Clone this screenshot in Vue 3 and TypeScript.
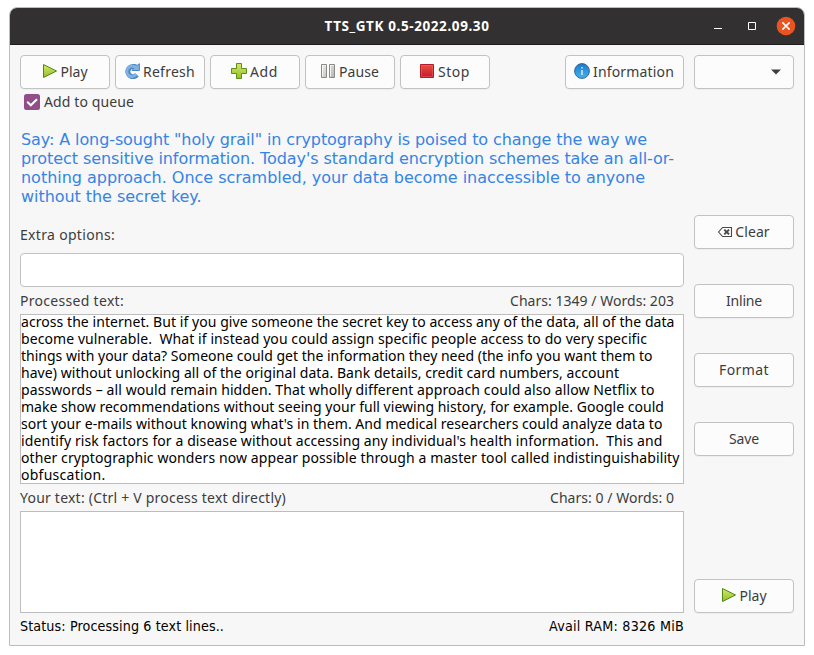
<script setup lang="ts">
import type { Directive } from 'vue'

interface TextLine {
  text: string
  width: number
}

interface ToolButton {
  label: string
  icon: string
  width: number
}

const tools: ToolButton[] = [
  { label: 'Play', icon: 'play', width: 27 },
  { label: 'Refresh', icon: 'refresh', width: 52 },
  { label: 'Add', icon: 'add', width: 28 },
  { label: 'Pause', icon: 'pause', width: 40 },
  { label: 'Stop', icon: 'stop', width: 32 },
]

const sayLines: TextLine[] = [
  { text: 'Say: A long-sought "holy grail" in cryptography is poised to change the way we', width: 626 },
  { text: "protect sensitive information. Today's standard encryption schemes take an all-or-", width: 653 },
  { text: 'nothing approach. Once scrambled, your data become inaccessible to anyone', width: 624 },
  { text: 'without the secret key.', width: 180.5 },
]

const processed: TextLine[] = [
  { text: 'across the internet. But if you give someone the secret key to access any of the data, all of the data', width: 653.5 },
  { text: 'become vulnerable.  What if instead you could assign specific people access to do very specific', width: 626 },
  { text: 'things with your data? Someone could get the information they need (the info you want them to', width: 631.5 },
  { text: 'have) without unlocking all of the original data. Bank details, credit card numbers, account', width: 598 },
  { text: 'passwords – all would remain hidden. That wholly different approach could also allow Netflix to', width: 633.5 },
  { text: 'make show recommendations without seeing your full viewing history, for example. Google could', width: 643 },
  { text: "sort your e-mails without knowing what's in them. And medical researchers could analyze data to", width: 641.5 },
  { text: "identify risk factors for a disease without accessing any individual's health information.  This and", width: 641.5 },
  { text: 'other cryptographic wonders now appear possible through a master tool called indistinguishability', width: 658.5 },
  { text: 'obfuscation.', width: 84.5 },
]

// Spreads the letters so that a line takes up exactly the given width.
const vFit: Directive<HTMLElement, number> = {
  mounted(el, binding) {
    const count = (el.textContent ?? '').length
    const natural = el.getBoundingClientRect().width
    el.style.letterSpacing = `${(binding.value - natural) / count}px`
  },
}
</script>

<template>
  <div class="window">
    <header class="titlebar">
      <span v-fit="165" class="title">TTS_GTK 0.5-2022.09.30</span>
      <div class="controls">
        <svg width="10" height="10" viewBox="0 0 10 10"><path d="M1 7.5h8" stroke="#fff" /></svg>
        <svg width="10" height="10" viewBox="0 0 10 10"><path d="M1.5 1.5h7v7h-7z" fill="none" stroke="#fff" /></svg>
        <svg width="20" height="20" viewBox="0 0 20 20">
          <circle cx="10" cy="10" r="9.3" fill="#e95420" />
          <path d="M6.4 6.4l7.2 7.2M13.6 6.4l-7.2 7.2" stroke="#fff" stroke-width="1.5" />
        </svg>
      </div>
    </header>

    <main class="content">
      <section class="left">
        <div class="toolbar">
          <button v-for="t in tools" :key="t.label" class="btn tool" type="button">
            <svg v-if="t.icon === 'play'" class="icon" viewBox="0 0 16 16">
              <path d="M1.5 1.5L14.5 8l-13 6.5z" fill="url(#leaf)" stroke="#4e8a13" />
            </svg>
            <svg v-else-if="t.icon === 'refresh'" class="icon" viewBox="0 0 16 16">
              <path d="M12.9 11.9A5.1 5.1 0 1 1 11 3.9" fill="none" stroke="#4f87c2" stroke-width="5" />
              <path d="M7.8 7.5h7.6V.7l-2.2 1.6-3-1v4z" fill="#7fb2e2" stroke="#4f87c2" stroke-linejoin="round" />
              <path d="M12.2 11.2A5.1 5.1 0 1 1 10.6 4L12.4 5.2" fill="none" stroke="#7fb2e2" stroke-width="3" />
            </svg>
            <svg v-else-if="t.icon === 'add'" class="icon" viewBox="0 0 16 16">
              <path d="M5.5.5h5v5h5v5h-5v5h-5v-5h-5v-5h5z" fill="url(#leaf)" stroke="#5a8f18" stroke-linejoin="round" />
            </svg>
            <svg v-else-if="t.icon === 'pause'" class="icon" viewBox="0 0 16 16">
              <path d="M1.5 1.5h5v13h-5zM9.5 1.5h5v13h-5z" fill="url(#steel)" stroke="#888a85" />
              <path d="M2.5 13.5v-11h3M10.5 13.5v-11h3" fill="none" stroke="#f4f4f2" />
            </svg>
            <svg v-else class="icon" viewBox="0 0 16 16">
              <path d="M1.5 1.5h13v13h-13z" fill="url(#ruby)" stroke="#b31a2a" />
              <path d="M2.5 13.5v-11h11v11z" fill="none" stroke="#ef6c60" stroke-opacity=".45" />
            </svg>
            <span v-fit="t.width">{{ t.label }}</span>
          </button>
          <button class="btn info" type="button">
            <svg class="icon" viewBox="0 0 16 16">
              <circle cx="8" cy="8" r="7.4" fill="url(#sky)" stroke="#356793" />
              <path d="M8 7v5M8 4v1.5" stroke="#d5ecfb" stroke-width="1.5" />
            </svg>
            <span v-fit="81">Information</span>
          </button>
        </div>

        <div class="check">
          <svg width="16" height="16" viewBox="0 0 16 16">
            <rect width="16" height="16" rx="2.5" fill="#924d8b" />
            <path d="M3.2 7.7l3.6 3.6 6.2-6" fill="none" stroke="#fff" stroke-width="2" />
          </svg>
          <span v-fit="90">Add to queue</span>
        </div>

        <div class="say">
          <div v-for="line in sayLines" :key="line.text">
            <span v-fit="line.width">{{ line.text }}</span>
          </div>
        </div>

        <div class="label extra"><span v-fit="95">Extra options:</span></div>
        <div class="entry"></div>

        <div class="label processed-label">
          <span v-fit="104">Processed text:</span>
          <span v-fit="164">Chars: 1349 / Words: 203</span>
        </div>
        <div class="textarea processed">
          <div class="lines">
            <div v-for="line in processed" :key="line.text">
              <span v-fit="line.width">{{ line.text }}</span>
            </div>
          </div>
        </div>

        <div class="label yours-label">
          <span v-fit="266">Your text: (Ctrl + V process text directly)</span>
          <span v-fit="124">Chars: 0 / Words: 0</span>
        </div>
        <div class="textarea yours"></div>

        <div class="status">
          <span v-fit="204">Status: Processing 6 text lines..</span>
          <span v-fit="135">Avail RAM: 8326 MiB</span>
        </div>
      </section>

      <aside class="right">
        <button class="btn combo" type="button">
          <svg width="10" height="6" viewBox="0 0 10 6"><path d="M0 .5h10L5 5.5z" fill="#3d3d3d" /></svg>
        </button>
        <div class="actions">
          <button class="btn" type="button">
            <svg class="icon clear" viewBox="0 0 16 16">
              <path d="M5.6 3.5h8.9v9H5.6L1.6 8z" fill="none" stroke="#4a4a4a" stroke-width="1.1" />
              <path d="M7.3 5.6l4.8 4.8M12.1 5.6l-4.8 4.8" stroke="#4a4a4a" stroke-width="2" />
            </svg>
            <span v-fit="34.5">Clear</span>
          </button>
          <button class="btn" type="button"><span v-fit="36">Inline</span></button>
          <button class="btn" type="button"><span v-fit="50">Format</span></button>
          <button class="btn" type="button"><span v-fit="30">Save</span></button>
        </div>
        <button class="btn play-bottom" type="button">
          <svg class="icon" viewBox="0 0 16 16">
            <path d="M1.5 1.5L14.5 8l-13 6.5z" fill="url(#leaf)" stroke="#4e8a13" />
          </svg>
          <span v-fit="27">Play</span>
        </button>
      </aside>
    </main>

    <svg class="defs" width="0" height="0">
      <defs>
        <linearGradient id="leaf" x1="0" y1="0" x2="0" y2="1">
          <stop offset="0" stop-color="#d5e86a" />
          <stop offset="1" stop-color="#93be28" />
        </linearGradient>
        <linearGradient id="steel" x1="0" y1="0" x2="1" y2="1">
          <stop offset="0" stop-color="#eeeeec" />
          <stop offset="1" stop-color="#b4b6b1" />
        </linearGradient>
        <linearGradient id="ruby" x1="0" y1="0" x2="0" y2="1">
          <stop offset="0" stop-color="#e9503f" />
          <stop offset="1" stop-color="#c41a30" />
        </linearGradient>
        <linearGradient id="sky" x1="0" y1="0" x2="0" y2="1">
          <stop offset="0" stop-color="#1c78cc" />
          <stop offset="1" stop-color="#45b4f0" />
        </linearGradient>
      </defs>
    </svg>
  </div>
</template>

<style>
body {
  background: #fff;
}
</style>

<style scoped>
.window {
  box-sizing: border-box;
  width: 796px;
  height: 639px;
  margin: 7px 0 0 9px;
  border: 1px solid #bdbdbd;
  border-radius: 8px 8px 0 0;
  background: #f7f7f7;
  overflow: hidden;
  font-family: "Noto Sans", "Open Sans", sans-serif;
  font-size: 14px;
  line-height: 20px;
  color: #3d3d3d;
}
.window span {
  white-space: pre;
}
.titlebar {
  box-sizing: border-box;
  display: grid;
  grid-template-columns: 1fr auto 1fr;
  align-items: center;
  height: 37px;
  padding: 0 8px;
  background: #323030;
  border-bottom: 1px solid #1e1d1d;
}
.title {
  grid-column: 2;
  color: #fff;
  font-size: 13.5px;
  font-weight: 700;
}
.controls {
  display: flex;
  align-items: center;
  justify-content: flex-end;
}
.controls svg + svg {
  margin-left: 24px;
}
.controls svg:last-child {
  margin-left: 19px;
}
.content {
  display: grid;
  grid-template-columns: 664px 100px;
  column-gap: 10px;
  padding: 10px;
}
.left,
.right {
  display: flex;
  flex-direction: column;
}
.toolbar {
  display: flex;
  gap: 5px;
}
.btn {
  box-sizing: border-box;
  display: flex;
  align-items: center;
  justify-content: center;
  height: 34px;
  padding: 0;
  border: 1px solid #c2c2c2;
  border-radius: 4px;
  background: #fcfcfc;
  box-shadow: 0 1px 1px rgba(0, 0, 0, 0.04);
  color: #3d3d3d;
  font: inherit;
}
.tool {
  width: 90px;
}
.info {
  width: 119px;
  margin-left: auto;
}
.icon {
  width: 16px;
  height: 16px;
  margin: 0 3px 2px -1px;
}
.clear {
  margin: 0 2px 0 -1px;
}
.check {
  display: flex;
  align-items: center;
  gap: 4px;
  height: 20px;
  margin-top: 3px;
  padding-left: 4px;
}
.say {
  margin: 18px 0 0 1px;
  height: 76px;
  color: #3584e4;
  font-family: "DejaVu Sans", sans-serif;
  font-size: 16px;
  line-height: 19px;
}
.say > div {
  height: 19px;
}
.label {
  display: flex;
  justify-content: space-between;
  height: 20px;
  padding-right: 10px;
}
.extra {
  margin-top: 19px;
}
.entry {
  box-sizing: border-box;
  height: 34px;
  margin-top: 8px;
  border: 1px solid #c2c2c2;
  border-radius: 4px;
  background: #fff;
}
.processed-label {
  margin-top: 4px;
}
.textarea {
  box-sizing: border-box;
  border: 1px solid #bdbdbd;
  background: #fff;
  color: #000;
  overflow: hidden;
}
.processed {
  height: 170px;
  margin-top: 3px;
}
.lines {
  margin-top: -2px;
  line-height: 17px;
}
.lines > div {
  height: 17px;
}
.yours-label {
  margin-top: 4px;
}
.yours {
  height: 102px;
  margin-top: 3px;
}
.status {
  display: flex;
  justify-content: space-between;
  margin-top: 3px;
  color: #000;
  font-family: "DejaVu Sans Condensed", "DejaVu Sans", sans-serif;
  font-stretch: condensed;
  font-size: 14.2px;
}
.combo {
  justify-content: flex-end;
  padding-right: 12px;
}
.actions {
  display: flex;
  flex-direction: column;
  gap: 35px;
  margin-top: 126px;
}
.play-bottom {
  margin-top: 123px;
}
.defs {
  display: block;
}
</style>
